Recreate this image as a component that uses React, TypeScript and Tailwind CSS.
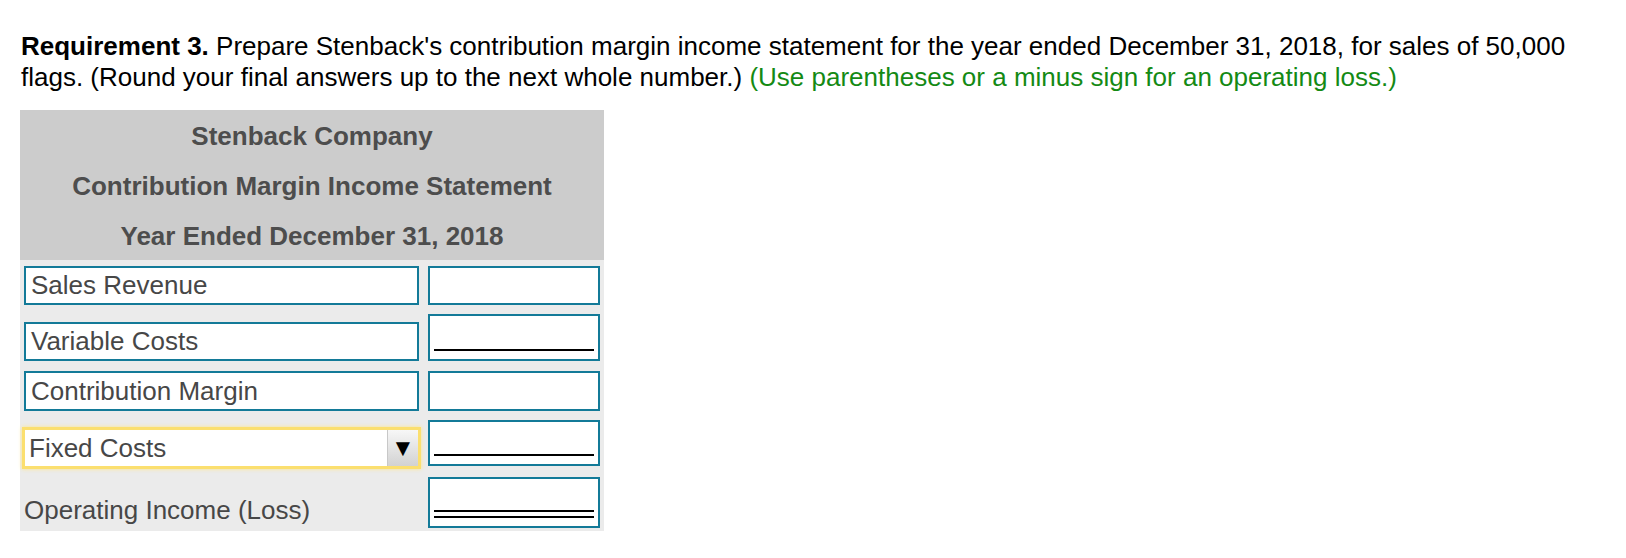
import React from "react";

const teal = "border-[#137a98]";

const ValueBox = ({ h, line }: { h: string; line?: "single" | "double" }) => {
  return (
    <div className={`w-[172px] ${h} border-2 ${teal} bg-white flex flex-col justify-end px-[4px] pb-[8px]`}>
      {line === "single" && <div className="h-[2px] bg-black" />}
      {line === "double" && (
        <>
          <div className="h-[2px] bg-black" />
          <div className="h-[4px]" />
          <div className="h-[2px] bg-black" />
        </>
      )}
    </div>
  );
};

const LabelBox = ({ text, h }: { text: string; h: string }) => {
  return (
    <div className={`w-[395px] ${h} border-2 ${teal} bg-white flex items-center pl-[5px] text-[26px] text-[#474747]`}>
      {text}
    </div>
  );
};

const App = () => {
  return (
    <div
      className="bg-white min-h-[558px] pl-[21px] pt-[31px] text-black"
      style={{ fontFamily: '"Liberation Sans", Arial, sans-serif' }}
    >
      <p className="w-[1575px] text-[26px] leading-[31px]">
        <span className="font-bold">Requirement 3.</span> Prepare Stenback's contribution margin income
        statement for the year ended December 31, 2018, for sales of 50,000 flags. (Round your final answers up to
        the next whole number.) <span className="text-[#148a14]">(Use parentheses or a minus sign for an operating loss.)</span>
      </p>

      <div className="mt-[17px] -ml-[1px] w-[584px] bg-[#ebebeb]">
        <div className="bg-[#cccccc] text-[#4d4d4d] font-bold text-[26px]">
          <div className="h-[50px] flex items-center justify-center pt-[2px]">Stenback Company</div>
          <div className="h-[50px] flex items-center justify-center pt-[2px]">Contribution Margin Income Statement</div>
          <div className="h-[50px] flex items-center justify-center pt-[2px]">Year Ended December 31, 2018</div>
        </div>

        <div className="px-[4px] pb-[3px]">
          {/* sales */}
          <div className="flex justify-between items-end pt-[6px]">
            <LabelBox text="Sales Revenue" h="h-[39px]" />
            <ValueBox h="h-[39px]" />
          </div>
          {/* variable */}
          <div className="flex justify-between items-end mt-[9px]">
            <LabelBox text="Variable Costs" h="h-[39px]" />
            <ValueBox h="h-[47px]" line="single" />
          </div>
          {/* contribution margin */}
          <div className="flex justify-between items-end mt-[10px]">
            <LabelBox text="Contribution Margin" h="h-[40px]" />
            <ValueBox h="h-[40px]" />
          </div>
          {/* fixed */}
          <div className="flex justify-between items-start mt-[9px]">
            <div className="mt-[7px] -ml-[2px] w-[399px] h-[42px] border-[3px] border-[#fbdf6f] shadow-[0_0_4px_#fde68a] bg-white flex items-stretch text-[26px] text-[#474747]">
              <div className="flex-1 flex items-center pl-[4px]">Fixed Costs</div>
              <div className="w-[31px] border-l border-[#c8c8c8] bg-gradient-to-b from-[#f7f7f7] to-[#d2d2d2] flex items-center justify-center text-black text-[24px] leading-none">
                ▼
              </div>
            </div>
            <ValueBox h="h-[46px]" line="single" />
          </div>
          {/* operating income */}
          <div className="flex justify-between items-end mt-[8px]">
            <div className="-mb-[2px] text-[26px] text-[#474747]">Operating Income (Loss)</div>
            <ValueBox h="h-[51px]" line="double" />
          </div>
        </div>
      </div>
    </div>
  );
};

export default App;
